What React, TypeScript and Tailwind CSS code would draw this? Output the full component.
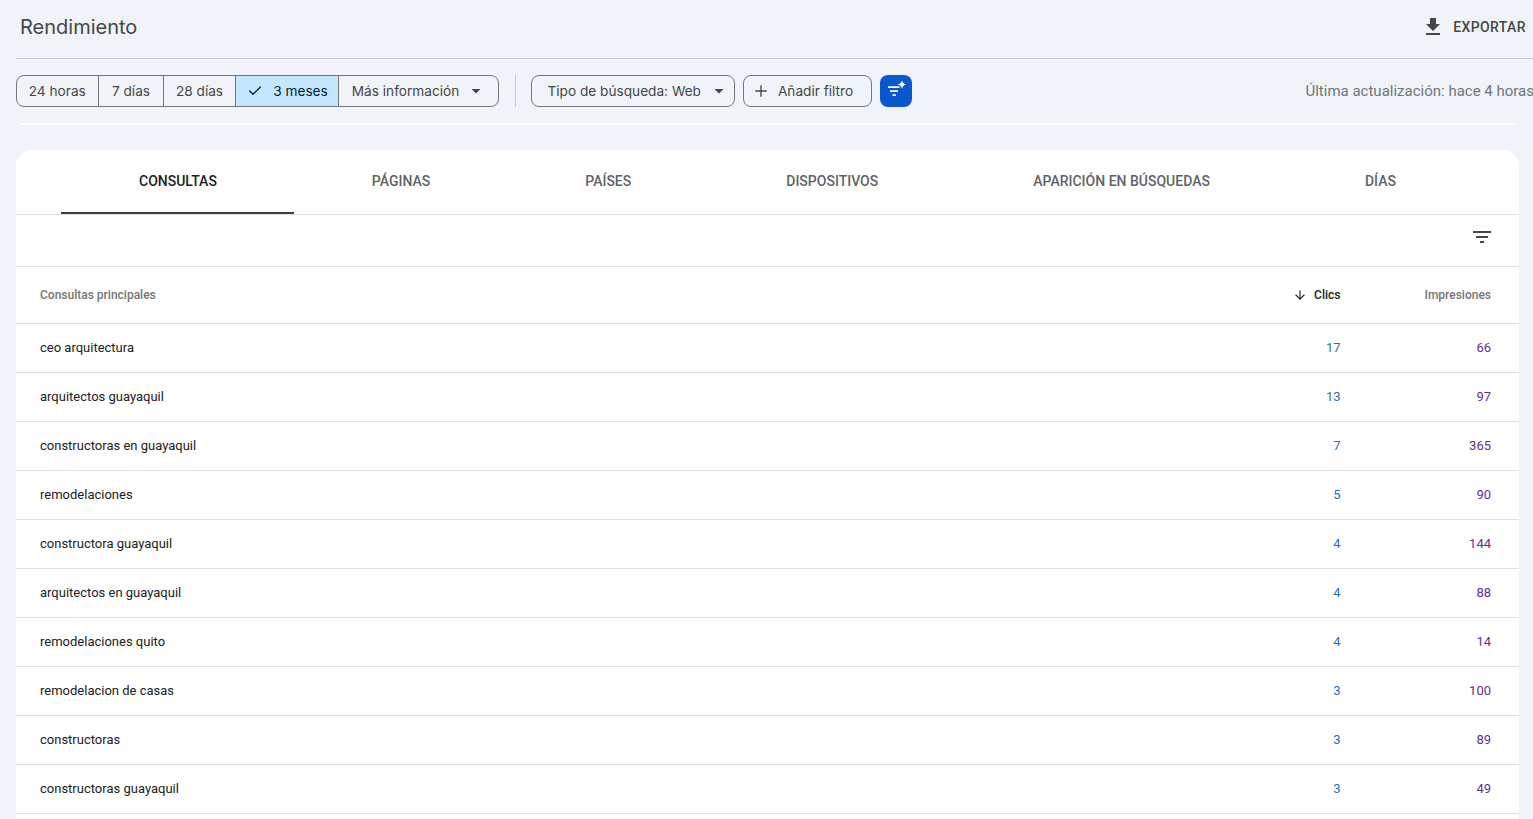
import React from "react";
import { ArrowDown, Check, Plus } from "lucide-react";

const rows = [
  { query: "ceo arquitectura", clicks: 17, impressions: 66 },
  { query: "arquitectos guayaquil", clicks: 13, impressions: 97 },
  { query: "constructoras en guayaquil", clicks: 7, impressions: 365 },
  { query: "remodelaciones", clicks: 5, impressions: 90 },
  { query: "constructora guayaquil", clicks: 4, impressions: 144 },
  { query: "arquitectos en guayaquil", clicks: 4, impressions: 88 },
  { query: "remodelaciones quito", clicks: 4, impressions: 14 },
  { query: "remodelacion de casas", clicks: 3, impressions: 100 },
  { query: "constructoras", clicks: 3, impressions: 89 },
  { query: "constructoras guayaquil", clicks: 3, impressions: 49 },
];

const tabs = ["CONSULTAS", "PÁGINAS", "PAÍSES", "DISPOSITIVOS", "APARICIÓN EN BÚSQUEDAS", "DÍAS"];

const Caret = () => (
  <svg width="10" height="5" viewBox="0 0 10 5" className="fill-[#444746]">
    <path d="M0.5 0h9L5 4.5z" />
  </svg>
);

const DownloadIcon = () => (
  <svg width="24" height="24" viewBox="0 0 24 24" className="fill-[#444746]">
    <path d="M19 9h-4V3H9v6H5l7 7 7-7zM5 18v2h14v-2H5z" />
  </svg>
);

const FilterIcon = () => (
  <svg width="24" height="24" viewBox="0 0 24 24" className="fill-[#444746]">
    <path d="M10 18h4v-2h-4v2zM3 6v2h18V6H3zm3 7h12v-2H6v2z" />
  </svg>
);

const SparkFilterIcon = () => (
  <svg width="20" height="20" viewBox="0 0 20 20" className="fill-white">
    <path d="M2 5.2h11.5v1.7H2zM4 9.2h8v1.7H4zM6.5 13.2h3.5v1.7H6.5z" />
    <path d="M16 -1c.4 2.6 1.9 4.1 4.5 4.5-2.6.4-4.1 1.9-4.5 4.5-.4-2.6-1.9-4.1-4.5-4.5 2.6-.4 4.1-1.9 4.5-4.5z" />
  </svg>
);

const segmentClass =
  "flex items-center justify-center h-full border-l border-[#747775] first:border-l-0";

const chipClass =
  "flex items-center h-full rounded-lg border border-[#747775] font-['Inter',sans-serif] text-[13.65px] text-[#444746]";

export default function App() {
  return (
    <div className="flex flex-col h-screen overflow-hidden bg-[#f0f4f9] font-['Roboto',sans-serif] pl-4">
      <header className="flex items-center justify-between h-[59px] pb-1 border-b border-[#c7c9cc]">
        <h1 className="pl-1 font-['Inter',sans-serif] text-[20px] text-[#444746]">Rendimiento</h1>
        <div className="flex items-center gap-2 pr-[7px] text-[14px] font-medium tracking-[0.4px] text-[#444746]">
          <DownloadIcon />
          <span>EXPORTAR</span>
        </div>
      </header>

      <div className="flex items-center h-8 mt-4 whitespace-nowrap">
        <div className={`${chipClass} overflow-hidden`}>
          <div className={`${segmentClass} w-[80.5px]`}>24 horas</div>
          <div className={`${segmentClass} w-[65px] pl-px`}>7 días</div>
          <div className={`${segmentClass} w-[72px] pl-px`}>28 días</div>
          <div className={`${segmentClass} gap-[10px] w-[103px] pl-[2px] bg-[#c2e7ff] text-[#001d35]`}>
            <Check size={16} strokeWidth={2} />
            3 meses
          </div>
          <div className={`${segmentClass} gap-3 w-[160px] pr-[3px]`}>
            Más información
            <Caret />
          </div>
        </div>
        <div className="w-px h-8 ml-4 bg-[#c7c9cc]" />
        <button className={`${chipClass} gap-[13px] ml-[15px] pl-4 pr-[10px]`}>
          Tipo de búsqueda: Web
          <Caret />
        </button>
        <button className={`${chipClass} gap-2 ml-2 pl-[8px] pr-[18px]`}>
          <Plus size={18} strokeWidth={1.8} />
          Añadir filtro
        </button>
        <div className="flex items-center justify-center w-8 h-8 ml-2 rounded-lg bg-[#0b57d0]">
          <SparkFilterIcon />
        </div>
        <span className="ml-auto -mr-[1px] text-[15px] text-[#70757a]">
          Última actualización: hace 4 horas
        </span>
      </div>

      <div className="h-[2px] mt-4 ml-1 mr-[18px] rounded-full bg-white" />

      <main className="flex-1 mt-[25px] mr-[14px] rounded-t-2xl bg-white">
        <nav className="flex h-[65px] pl-[45.5px] border-b border-[#e0e0e0] whitespace-nowrap">
          {tabs.map((tab, i) => (
            <div
              key={tab}
              className={
                i === 0
                  ? "relative flex items-center h-[64px] pb-px px-[77.5px] text-[14px] font-medium text-[#202124]"
                  : "flex items-center h-[64px] pb-px px-[77.5px] text-[14px] font-medium text-[#5f6368]"
              }
            >
              {tab}
              {i === 0 && <span className="absolute -left-[0.5px] right-0 bottom-0 h-[2px] bg-[#3c4043]" />}
            </div>
          ))}
        </nav>

        <div className="flex items-center justify-end h-[52px] pb-2 pr-[25px] border-b border-[#e0e0e0]">
          <FilterIcon />
        </div>

        <div className="flex items-center h-[57px] pl-6 pr-7 border-b border-[#e0e0e0] text-[12px] font-medium text-[#757575]">
          <span className="flex-1">Consultas principales</span>
          <span className="flex items-center justify-end gap-[7px] w-[120.5px] text-[#202124]">
            <ArrowDown size={14} strokeWidth={2} />
            Clics
          </span>
          <span className="w-[150.5px] text-right">Impresiones</span>
        </div>

        {rows.map((row) => (
          <div
            key={row.query}
            className="flex items-center h-[49px] pl-6 pr-7 border-b border-[#e0e0e0] text-[13px]"
          >
            <span className="flex-1 text-[#202124]">{row.query}</span>
            <span className="w-[120.5px] text-right text-[#1f72b5]">{row.clicks}</span>
            <span className="w-[150.5px] text-right text-[#6a2c91]">{row.impressions}</span>
          </div>
        ))}
      </main>
    </div>
  );
}
